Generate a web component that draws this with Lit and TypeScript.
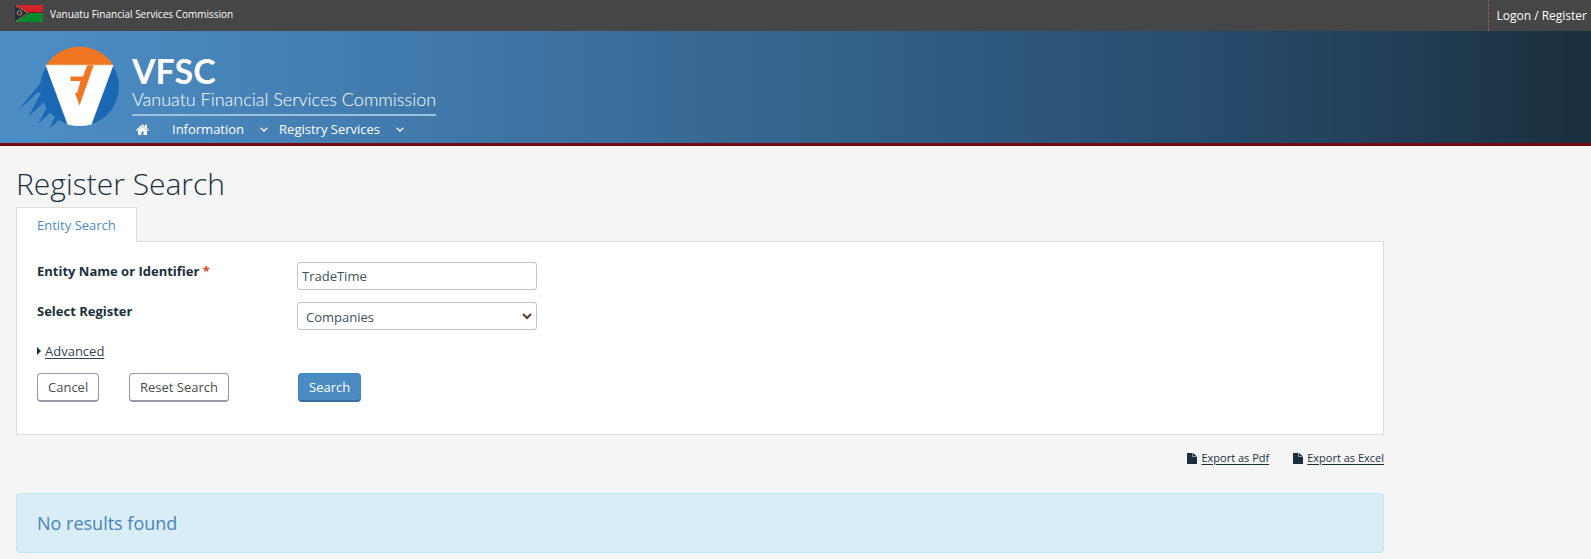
import { LitElement, html, css, svg } from "lit";
import { customElement, property, state } from "lit/decorators.js";

const flag = svg`
  <svg class="flag" width="28" height="17" viewBox="0 0 28 17" aria-hidden="true">
    <rect width="28" height="8" fill="#d0242a" />
    <rect y="8" width="28" height="9" fill="#0a8a2c" />
    <path d="M0 0L14 8.5L0 17Z" fill="#1c2f42" />
    <path d="M13 7.500H28" stroke="#3a1614" stroke-width="1" />
    <path d="M1 1L13 8L1 16" fill="none" stroke="#c98a4a" stroke-width="1" stroke-dasharray="2 1" />
    <path d="M14 7.500H28" stroke="#a8202a" stroke-width="1" stroke-dasharray="1 1" />
    <circle cx="4.500" cy="8" r="2.200" fill="none" stroke="#c98a5a" stroke-width="1" />
  </svg>`;

const crest = svg`
  <svg class="crest" width="105" height="84" viewBox="5 5 105 84" role="img" aria-label="VFSC logo">
    <path d="M37 34C34 36 32 40 30.500 43L7.500 71L28 52L31 53L18 77L35 61L38 65L28 84L43 70L46 74L40 88L51 78L60 84Z" fill="#1a67b3" />
    <circle cx="69.700" cy="46.700" r="39.300" fill="#1a67b3" />
    <path d="M36.500 25A39.300 39.300 0 0 1 103 25Z" fill="#f17623" />
    <path d="M35.500 25H103.500L81.500 84.500Q69.500 87.500 57.500 84.500Z" fill="#fff" />
    <path d="M77.500 24.500H84L69.500 65.500L65 53H67L70.500 41H60.500V36.500H73Z" fill="#f17623" />
    <path d="M37 25H103" stroke="#f9c79b" stroke-width="1" stroke-dasharray="2 1" />
  </svg>`;

const chevron = svg`
  <svg width="8" height="5" viewBox="0 0 8 5" aria-hidden="true">
    <path d="M0.700 0.700L4 4L7.300 0.700" fill="none" stroke="currentColor" stroke-width="1.300" />
  </svg>`;

const house = svg`
  <svg width="13" height="11" viewBox="0 0 13 11" aria-hidden="true">
    <path d="M0 6L6.500 0.300L9 2.500V0.800H11V4.300L13 6L12.200 6.900L6.500 2L0.800 6.900Z" fill="currentColor" />
    <path d="M6.500 2.400L11 6.300V11H7.600V7.600H5.400V11H2V6.300Z" fill="currentColor" />
  </svg>`;

const fileIcon = svg`
  <svg width="10" height="11" viewBox="0 0 10 11" aria-hidden="true">
    <path d="M0 0H5.500V4H10V11H0Z" fill="currentColor" />
    <path d="M6 0L10 3.600H6Z" fill="currentColor" />
  </svg>`;

@customElement("site-header")
export class SiteHeader extends LitElement {
  static styles = css`
    :host { display: block; color: #fff; }
    a { color: inherit; text-decoration: none; }
    .top { display: flex; align-items: stretch; height: 31px; background: #464646; }
    .agency { flex: 1; display: flex; align-items: center; gap: 7px; padding: 0 15px 4px; font-size: 10px; }
    .logon { display: flex; align-items: center; padding: 0 4px 0 7px; border-left: 1px dotted #a5685c; font-size: 12px; }
    .banner {
      display: flex; align-items: flex-start; gap: 12px; padding: 14px 15px 0; height: 98px;
      background: linear-gradient(90deg, #4d8ec6 0%, #447fb3 20%, #264a69 78%, #1b2f3d 100%);
      border-bottom: 3px solid #750c11;
    }
    .crest { flex: none; }
    .brand { display: flex; flex-direction: column; }
    .name { margin: 0; padding-top: 6px; font: 700 34px/39px Lato, sans-serif; }
    .full { margin: 0; padding-bottom: 6px; font: 300 18px/18px Lato, sans-serif; border-bottom: 2px solid #9dc0dd; }
    nav { display: flex; align-items: center; font-size: 13px; line-height: 18px; padding: 4px 4px 0; }
    .home { display: flex; margin-right: 23px; }
    .item { display: flex; align-items: center; gap: 16px; margin-right: 11px; }
  `;

  render() {
    return html`
      <div class="top">
        <div class="agency">${flag}<span>Vanuatu Financial Services Commission</span></div>
        <a class="logon" href="#logon">Logon / Register</a>
      </div>
      <header class="banner">
        ${crest}
        <div class="brand">
          <p class="name">VFSC</p>
          <p class="full">Vanuatu Financial Services Commission</p>
          <nav aria-label="Main">
            <a class="home" href="#home" aria-label="Home">${house}</a>
            ${["Information", "Registry Services"].map(
              (name) => html`<a class="item" href="#menu">${name}${chevron}</a>`
            )}
          </nav>
        </div>
      </header>
    `;
  }
}

@customElement("app-root")
export class AppRoot extends LitElement {
  @property() term = "TradeTime";
  @state() private register = "Companies";

  static styles = css`
    :host {
      display: block; min-height: 100vh; background: #f5f5f5; color: #1b2f3d;
      font-family: "Open Sans", sans-serif; font-size: 13px; line-height: 18px;
    }
    * { box-sizing: border-box; }
    main { max-width: 1400px; padding: 16px 16px 0; }
    h1 { margin: 0 0 2px; font-weight: 300; font-size: 30px; line-height: 43px; }
    .tabs { display: flex; }
    .tab {
      margin-bottom: -1px; padding: 9px 20px 8px; border: 1px solid #ddd; border-bottom: 0;
      background: #fff; color: #4b8bc4; text-decoration: none; line-height: 17px;
    }
    .panel { padding: 20px 20px 32px; border: 1px solid #ddd; background: #fff; }
    .row { display: grid; grid-template-columns: 260px minmax(0, 240px); margin-bottom: 12px; }
    .label { font-weight: 700; }
    .required { color: #d9411e; }
    .field {
      width: 100%; height: 28px; border: 1px solid #c3c3c3; border-radius: 3px; background: #fff;
      color: #3d4f5c; font: inherit; padding: 0 4px;
    }
    .picker { display: grid; align-items: center; }
    .picker > * { grid-area: 1 / 1; }
    select.field { appearance: none; padding: 2px 8px 0; }
    .arrow { justify-self: end; margin-right: 5px; pointer-events: none; }
    .advanced { display: flex; width: fit-content; align-items: center; gap: 4px; color: #33444f; text-underline-offset: 2px; }
    .actions { display: grid; grid-template-columns: 92px 169px auto; justify-content: start; margin-top: 13px; }
    button {
      justify-self: start; height: 29px; padding: 0 10px; border: 1px solid #9c98a8; border-bottom-width: 2px;
      border-radius: 4px; background: #fff; color: #4a4a4f; font: inherit; white-space: nowrap;
    }
    .primary { border-color: #4585bd #4585bd #3a6ea0; background: #4b8bc4; color: #fff; }
    .exports { display: flex; justify-content: flex-end; gap: 24px; margin-top: 14px; font-size: 11px; }
    .export { display: flex; align-items: center; gap: 4px; color: #1b2f3d; text-decoration: none; }
    .link { text-decoration: underline; text-underline-offset: 2px; }
    .notice {
      margin: 26px 0 0; padding: 19px 20px; border: 1px solid #bce8f1; border-radius: 4px;
      background: #d9edf7; color: #4a83b8; font-size: 18px; line-height: 20px;
    }
  `;

  render() {
    return html`
      <site-header></site-header>
      <main>
        <h1>Register Search</h1>
        <div class="tabs"><a class="tab" href="#entity">Entity Search</a></div>
        <form class="panel" @submit=${(e: Event) => e.preventDefault()}>
          <div class="row">
            <label class="label" for="term">Entity Name or Identifier <span class="required">*</span></label>
            <input class="field" id="term" type="text" .value=${this.term}
              @input=${(e: Event) => (this.term = (e.target as HTMLInputElement).value)} />
          </div>
          <div class="row">
            <label class="label" for="register">Select Register</label>
            <div class="picker">
              <select class="field" id="register"
                @change=${(e: Event) => (this.register = (e.target as HTMLSelectElement).value)}>
                <option selected>${this.register}</option>
              </select>
              <svg class="arrow" width="10" height="7" viewBox="0 0 10 7" aria-hidden="true">
                <path d="M1 1L5 5L9 1" fill="none" stroke="#5c3a34" stroke-width="2" />
              </svg>
            </div>
          </div>
          <a class="advanced" href="#advanced">
            <svg width="4" height="8" viewBox="0 0 4 8" aria-hidden="true"><path d="M0 0L4 4L0 8Z" fill="#1b2f3d" /></svg>
            <span>Advanced</span>
          </a>
          <div class="actions">
            <button type="button">Cancel</button>
            <button type="reset">Reset Search</button>
            <button class="primary" type="submit">Search</button>
          </div>
        </form>
        <div class="exports">
          ${["Pdf", "Excel"].map(
            (kind) => html`<a class="export" href="#export">${fileIcon}<span class="link">Export as ${kind}</span></a>`
          )}
        </div>
        <p class="notice" role="status">No results found</p>
      </main>
    `;
  }
}
